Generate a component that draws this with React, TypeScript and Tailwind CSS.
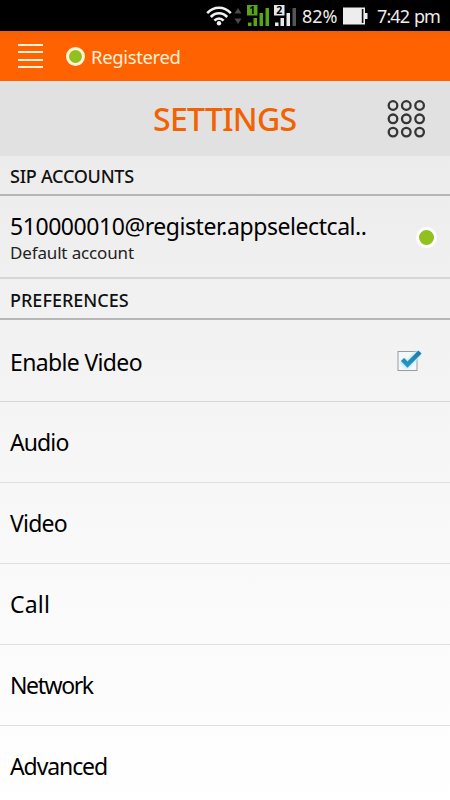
import React, { useState } from 'react';

interface Preference {
  id: number;
  title: string;
  spacing: string;
}

const preferences: Preference[] = [
  { id: 1, title: 'Audio', spacing: 'tracking-[-0.9px]' },
  { id: 2, title: 'Video', spacing: 'tracking-[-0.8px]' },
  { id: 3, title: 'Call', spacing: 'tracking-[0.2px]' },
  { id: 4, title: 'Network', spacing: 'tracking-[-1.4px]' },
  { id: 5, title: 'Advanced', spacing: 'tracking-[-1.1px]' },
];

const WifiIcon = () => (
  <svg width="26" height="20" viewBox="0 0 26 20" fill="none" stroke="#f2f2f2" strokeWidth="2.6">
    <path d="M1.2 7.2C8 0 18 0 24.8 7.2" />
    <path d="M4.8 11C9.5 6 16.5 6 21.2 11" />
    <path d="M8.4 14.6C11 11.8 15 11.8 17.6 14.6" />
    <circle cx="13" cy="17.3" r="2.2" fill="#f2f2f2" stroke="none" />
  </svg>
);

const DataArrows = () => (
  <svg width="8" height="16" viewBox="0 0 8 16" fill="#4a4a4a">
    <path d="M4 0L7.5 5.500H0.5Z" />
    <path d="M4 16L7.5 10.500H0.5Z" />
  </svg>
);

const SimSignal = ({ sim, color, last }: { sim: string; color: string; last: string }) => (
  <svg width="23" height="23" viewBox="0 0 23 23">
    <rect x="1" y="18.5" width="3.5" height="3.5" fill={color} />
    <rect x="6.5" y="14" width="3.5" height="8" fill={color} />
    <rect x="12.5" y="9" width="3.5" height="13" fill={color} />
    <rect x="18.5" y="4" width="3.5" height="18" fill={last} />
    <rect x="0" y="1" width="10.5" height="10.5" fill={color} />
    <text x="5.2" y="10" fontSize="10.5" fontWeight="700" textAnchor="middle" fill="#000">{sim}</text>
  </svg>
);

const BatteryIcon = () => (
  <svg width="25" height="18" viewBox="0 0 25 18">
    <rect x="0" y="0.5" width="22" height="17" fill="#ededed" />
    <rect x="18.8" y="2" width="1.6" height="14" fill="#111" />
    <rect x="22" y="6" width="2.5" height="6" fill="#ededed" />
  </svg>
);

const KeypadIcon = () => (
  <svg width="40" height="40" viewBox="0 0 40 40" fill="none" stroke="#353535" strokeWidth="2.3">
    {[6.5, 19.8, 33.1].map((y) =>
      [7, 20.3, 33.6].map((x) => <circle key={`${x}-${y}`} cx={x} cy={y} r="4.3" />)
    )}
  </svg>
);

const CheckIcon = ({ checked }: { checked: boolean }) => (
  <svg width="26" height="24" viewBox="0 0 26 24" fill="none">
    <defs>
      <linearGradient id="tick" x1="0" y1="0" x2="0" y2="1">
        <stop offset="0" stopColor="#1b7da6" />
        <stop offset="1" stopColor="#2496c4" />
      </linearGradient>
      <filter id="glow" x="-30%" y="-30%" width="160%" height="160%">
        <feGaussianBlur stdDeviation="1" />
      </filter>
    </defs>
    <rect x="2" y="2.500" width="19" height="19" fill="#f5f8fa" stroke="#9b9b9b" />
    {checked && (
      <>
        <path d="M6 11L11 16L23 4" stroke="#bfe9f7" strokeWidth="7" filter="url(#glow)" />
        <path d="M6.500 10.500L11.500 15.600L24 3" stroke="url(#tick)" strokeWidth="4.400" />
      </>
    )}
  </svg>
);

const SectionHeader = ({ title, className }: { title: string; className: string }) => (
  <div className={`shrink-0 border-b-2 border-[#b6b6b6] pl-[10px] font-medium text-[18px] text-[#111111] whitespace-nowrap ${className}`}>
    {title}
  </div>
);

const App = () => {
  const [videoEnabled, setVideoEnabled] = useState(true);

  return (
    <div className="flex flex-col w-full h-[800px] overflow-hidden text-black font-['Noto_Sans',sans-serif]">
      <div className="flex shrink-0 items-center h-[31px] bg-black pl-[206px] text-[#ededed] text-[18px]">
        <WifiIcon />
        <div className="ml-0.5 pt-px"><DataArrows /></div>
        <div className="ml-[5px]"><SimSignal sim="1" color="#58a618" last="#58a618" /></div>
        <div className="ml-1"><SimSignal sim="2" color="#e8e8e8" last="#555555" /></div>
        <span className="ml-[5px] w-[41px] pt-0.5">82%</span>
        <BatteryIcon />
        <span className="ml-[9px] pt-0.5 whitespace-nowrap tracking-[-0.9px] [word-spacing:1px]">7:42 pm</span>
      </div>

      <div className="flex shrink-0 items-center h-[50px] bg-gradient-to-b from-[#f45f05] via-[#ff6200] via-20% to-[#ff6200] pl-[18px] text-[#fff0d8]">
        <button className="flex flex-col gap-[5.5px] w-[25px]">
          <span className="block h-0.5 bg-[#fff0d8]" />
          <span className="block h-0.5 bg-[#fff0d8]" />
          <span className="block h-0.5 bg-[#fff0d8]" />
          <span className="block h-0.5 bg-[#fff0d8]" />
        </button>
        <span className="ml-[23px] size-[19px] rounded-full border-[3px] border-[#fff3d6] bg-[#92c01f]" />
        <span className="ml-1.5 pt-px text-[18.5px] tracking-[-0.35px]">Registered</span>
      </div>

      <div className="flex shrink-0 items-center justify-between h-[75px] bg-[#e1e1e1] pl-[153px] pr-6">
        <h1 className="pt-px text-[32px] font-medium text-[#f26200] tracking-[-0.7px]">SETTINGS</h1>
        <KeypadIcon />
      </div>

      <div className="flex flex-col flex-1 bg-gradient-to-b from-[#ececec] via-[#f8f8f8] via-55% to-white">
        <SectionHeader title="SIP ACCOUNTS" className="h-10 leading-[41px] tracking-[-0.25px]" />
        <div className="flex shrink-0 items-center justify-between h-[83px] border-b-2 border-[#d6d6d6] pl-[10px] pr-[13px]">
          <div className="pt-0.5">
            <p className="text-[23px] leading-[30px] whitespace-nowrap tracking-[-0.44px]">510000010@register.appselectcal..</p>
            <p className="text-[17px] leading-6 text-[#222222] tracking-[-0.15px]">Default account</p>
          </div>
          <span className="shrink-0 mt-0.5 size-[21px] rounded-full border-[3px] border-white bg-[#92c01f]" />
        </div>

        <SectionHeader title="PREFERENCES" className="h-[41px] leading-[42px]" />
        <div
          className="flex shrink-0 items-center justify-between h-[82px] border-b border-[#d6d6d6] pl-[10px] pr-[28px]"
          onClick={() => setVideoEnabled(!videoEnabled)}
        >
          <span className="pt-[3px] text-[23px] tracking-[-0.65px]">Enable Video</span>
          <CheckIcon checked={videoEnabled} />
        </div>
        {preferences.map((item) => (
          <div key={item.id} className="flex shrink-0 items-center h-[81px] border-b border-[#dfdfdf] pt-px pl-[10px] text-[23px]">
            <span className={item.spacing}>{item.title}</span>
          </div>
        ))}
      </div>
    </div>
  );
};

export default App;
